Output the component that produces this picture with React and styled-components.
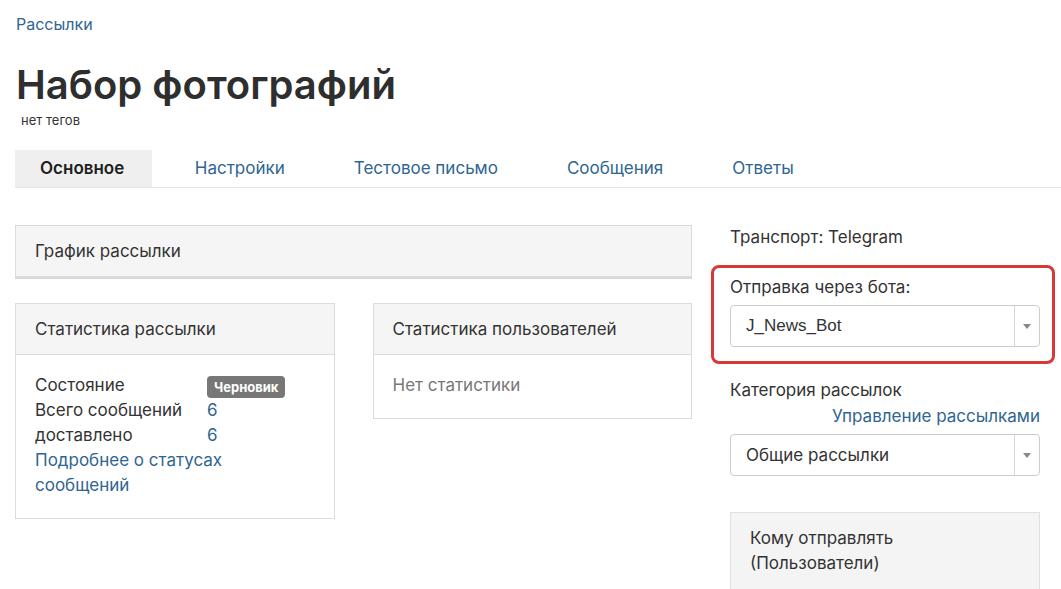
import React from "react";
import styled, { createGlobalStyle } from "styled-components";

const GlobalStyle = createGlobalStyle`
  html, body {
    margin: 0;
    background: #fff;
    overflow: hidden;
  }
  body {
    font-family: Inter, "Noto Sans", "Liberation Sans", sans-serif;
    color: #333;
    font-size: 17px;
  }
`;

const Page = styled.div`
  padding: 12px 0 0 15px;
  width: 1046px;
`;

const Crumb = styled.a`
  display: block;
  padding-left: 1px;
  font-size: 16px;
  line-height: 24px;
  color: #2f6591;
  text-decoration: none;
`;

const Title = styled.h1`
  margin: 25px 0 0 1px;
  font-size: 40px;
  line-height: 48px;
  font-weight: 600;
  color: #2e2e2e;
`;

const Tags = styled.div`
  margin: 3px 0 0 6px;
  font-size: 13px;
  line-height: 16px;
  color: #333;
`;

const Tabs = styled.nav`
  display: flex;
  margin-top: 22px;
  border-bottom: 1px solid #e2e2e2;
`;

const Tab = styled.a`
  display: block;
  padding: ${(p) => (p.$active ? "0 28px 0 25px" : "0 34.5px")};
  margin-right: ${(p) => (p.$active ? "8px" : "0")};
  line-height: 37px;
  font-size: 17px;
  font-weight: ${(p) => (p.$active ? 600 : 400)};
  color: ${(p) => (p.$active ? "#1e1e1e" : "#2f6591")};
  background: ${(p) => (p.$active ? "#efefef" : "transparent")};
  text-decoration: none;
`;

const Layout = styled.div`
  display: grid;
  grid-template-columns: 677px 310px;
  column-gap: 38px;
  margin-top: 37px;
`;

const Main = styled.div`
  display: flex;
  flex-direction: column;
  gap: 26px;
`;

const Panel = styled.section`
  border: 1px solid #dcdcdc;
  background: #fff;
  box-shadow: ${(p) => (p.$raised ? "0 2px 0 #d8d8d8" : "none")};
`;

const PanelHead = styled.div`
  background: #f5f5f5;
  padding: 12px 19px;
  line-height: 26px;
  font-size: 17px;
  color: #333;
  border-bottom: ${(p) => (p.$open ? "1px solid #dcdcdc" : "none")};
`;

const PanelBody = styled.div`
  padding: 18px 19px 20px;
  line-height: 25px;
  color: ${(p) => (p.$muted ? "#777" : "#333")};
`;

const StatsRow = styled.div`
  display: grid;
  grid-template-columns: 1fr 1fr;
  gap: 38px;
  align-items: start;
`;

const Stat = styled.div`
  display: grid;
  grid-template-columns: 172px 1fr;
  align-items: center;
`;

const Value = styled.span`
  color: #2f6591;
`;

const Badge = styled.span`
  justify-self: start;
  background: #777;
  color: #fff;
  font-size: 13px;
  font-weight: 700;
  line-height: 22px;
  padding: 0 7px;
  border-radius: 4px;
  margin-top: 2px;
`;

const Link = styled.a`
  display: block;
  color: #2f6591;
  width: 200px;
  text-decoration: none;
`;

const Side = styled.aside`
  display: flex;
  flex-direction: column;
`;

const Label = styled.div`
  line-height: 25px;
  font-size: 17px;
  color: #333;
  margin-top: ${(p) => p.$top || 0}px;
  margin-bottom: ${(p) => p.$gap || 0}px;
`;

const Highlight = styled.div`
  margin: 15px -15px 0 -19px;
  padding: 7px 12px 14px 16px;
  border: 3px solid #d73838;
  border-radius: 8px;
`;

const SideLink = styled.a`
  align-self: flex-end;
  line-height: 24px;
  color: #2f6591;
  text-decoration: none;
  margin: 1px 0 6px;
`;

const Select = styled.div`
  display: flex;
  height: 42px;
  border: 1px solid #cdcdcd;
  border-radius: 4px;
  background: #fff;
  box-sizing: border-box;
  font-family: ${(p) => (p.$plain ? `"Liberation Sans", Arial, sans-serif` : "inherit")};
`;

const SelectText = styled.div`
  flex: 1;
  padding-left: 15px;
  line-height: 40px;
  font-size: 17px;
  color: #333;
`;

const SelectArrow = styled.div`
  width: 24px;
  border-left: 1px solid #d5d5d5;
  display: flex;
  align-items: center;
  justify-content: center;
  &::after {
    content: "";
    border-left: 4px solid transparent;
    border-right: 4px solid transparent;
    border-top: 5px solid #888;
  }
`;

const Recipients = styled.div`
  margin-top: 36px;
  background: #f4f4f4;
  border: 1px solid #e0e0e0;
  border-bottom: none;
  padding: 13px 19px 14px;
  line-height: 25px;
  color: #333;
`;

export default function App() {
  return (
    <Page>
      <GlobalStyle />
      <Crumb href="#">Рассылки</Crumb>
      <Title>Набор фотографий</Title>
      <Tags>нет тегов</Tags>

      <Tabs>
        <Tab $active>Основное</Tab>
        <Tab>Настройки</Tab>
        <Tab>Тестовое письмо</Tab>
        <Tab>Сообщения</Tab>
        <Tab>Ответы</Tab>
      </Tabs>

      <Layout>
        <Main>
          <Panel $raised>
            <PanelHead>График рассылки</PanelHead>
          </Panel>
          <StatsRow>
            <Panel>
              <PanelHead $open>Статистика рассылки</PanelHead>
              <PanelBody>
                <Stat>
                  <span>Состояние</span>
                  <Badge>Черновик</Badge>
                </Stat>
                <Stat>
                  <span>Всего сообщений</span>
                  <Value>6</Value>
                </Stat>
                <Stat>
                  <span>доставлено</span>
                  <Value>6</Value>
                </Stat>
                <Link href="#">Подробнее о статусах сообщений</Link>
              </PanelBody>
            </Panel>
            <Panel>
              <PanelHead $open>Статистика пользователей</PanelHead>
              <PanelBody $muted>Нет статистики</PanelBody>
            </Panel>
          </StatsRow>
        </Main>

        <Side>
          <Label>Транспорт: Telegram</Label>
          <Highlight>
            <Label $gap={5}>Отправка через бота:</Label>
            <Select $plain>
              <SelectText>J_News_Bot</SelectText>
              <SelectArrow />
            </Select>
          </Highlight>
          <Label $top={14}>Категория рассылок</Label>
          <SideLink href="#">Управление рассылками</SideLink>
          <Select>
            <SelectText>Общие рассылки</SelectText>
            <SelectArrow />
          </Select>
          <Recipients>
            Кому отправлять
            <br />
            (Пользователи)
          </Recipients>
        </Side>
      </Layout>
    </Page>
  );
}
